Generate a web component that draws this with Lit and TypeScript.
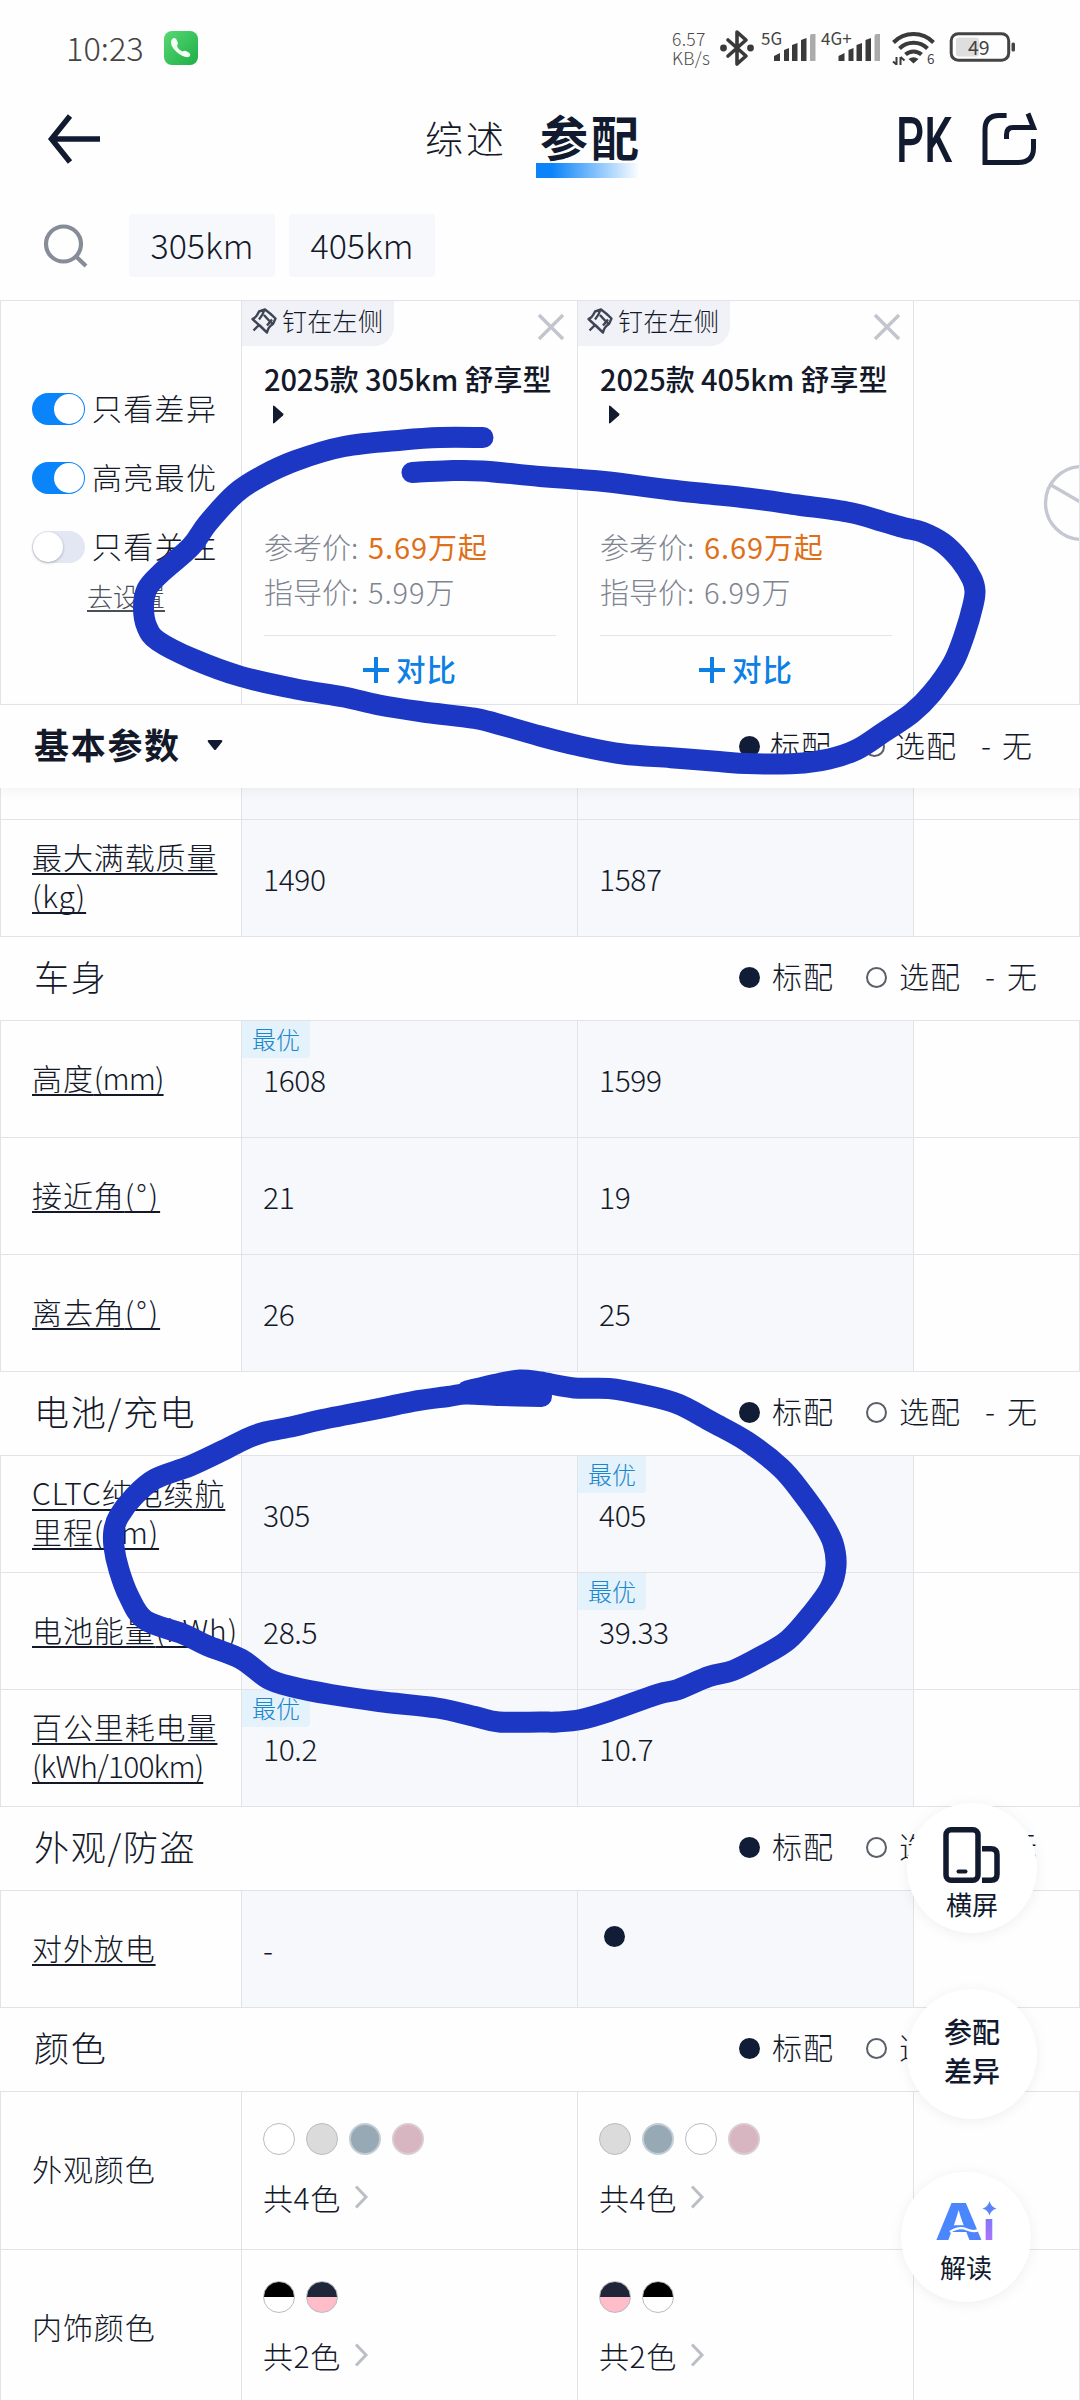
import { LitElement, html, svg, css, nothing } from "lit";
import { customElement, property } from "lit/decorators.js";

type Point = [number, number];

interface Row {
  label: string;
  unit?: string;
  /** Extra letter width class for the unit. */
  unitFit?: "narrow" | "wide";
  wrapUnit?: boolean;
  values: [string, string];
  best?: 0 | 1;
}

interface Section {
  title: string;
  rows: Row[];
}

interface ColorRow {
  label: string;
  count: number;
  swatches: [string[], string[]];
}

const SECTIONS: Section[] = [
  {
    title: "车身",
    rows: [
      { label: "高度", unit: "(mm)", unitFit: "narrow", values: ["1608", "1599"], best: 0 },
      { label: "接近角", unit: "(°)", unitFit: "wide", values: ["21", "19"] },
      { label: "离去角", unit: "(°)", unitFit: "wide", values: ["26", "25"] },
    ],
  },
  {
    title: "电池/充电",
    rows: [
      { label: "CLTC纯电续航\n里程", unit: "(km)", values: ["305", "405"], best: 1 },
      { label: "电池能量", unit: "(kWh)", values: ["28.5", "39.33"], best: 1 },
      { label: "百公里耗电量", unit: "(kWh/100km)", unitFit: "narrow", wrapUnit: true, values: ["10.2", "10.7"], best: 0 },
    ],
  },
  {
    title: "外观/防盗",
    rows: [{ label: "对外放电", values: ["-", "●"] }],
  },
];

const COLOR_ROWS: ColorRow[] = [
  { label: "外观颜色", count: 4, swatches: [["white", "silver", "steel", "rose"], ["silver", "steel", "white", "rose"]] },
  { label: "内饰颜色", count: 2, swatches: [["black-white", "navy-pink"], ["navy-pink", "black-white"]] },
];

const CARS = [
  { name: "2025款 305km 舒享型", price: "5.69万起", guide: "5.99万" },
  { name: "2025款 405km 舒享型", price: "6.69万起", guide: "6.99万" },
];

const PRICE_LOOP: Point[] = [
  [483, 437.5], [440, 437.5], [403, 440], [344, 446.5], [296, 460.5], [262, 476], [236, 493], [208, 523], [191, 546.5],
  [161, 573], [147, 589], [143.5, 608], [147, 627], [158, 641], [193, 659], [241, 676.5], [296, 689], [344, 697],
  [379, 705], [420, 711.5], [472, 718], [489, 721.5], [540, 736], [578, 745.5], [623, 754], [671, 757.7], [719, 761.5],
  [747, 763.6], [795, 763.6], [829, 759], [857, 749.5], [884, 732], [912, 713], [932, 693], [953, 663], [965, 633],
  [973, 605], [975, 591], [972, 579], [960, 560], [943, 543], [922, 532], [905, 528], [884, 522], [850, 512.5],
  [798, 505], [747, 498], [671, 490], [609, 482], [574, 479], [540, 476.5], [482, 471], [448, 470.7], [412, 472.5],
];

const RANGE_LOOP: Point[] = [
  [541.5, 1396.5], [500, 1395.5], [466, 1394], [448, 1396.5], [413, 1401.5], [379, 1408.5], [320, 1420], [293, 1426.5],
  [265, 1432], [248, 1438], [224, 1450], [190, 1466], [155, 1479], [134, 1496.5], [119, 1516], [114, 1530],
  [114, 1547], [119, 1570], [129, 1596.5], [145, 1620], [182, 1633.5], [207, 1645.5], [241, 1659], [268.5, 1679],
  [293, 1687], [331, 1694.5], [379, 1701.5], [437, 1708], [475, 1716.5], [499, 1722], [540, 1722], [557, 1722],
  [581, 1719.5], [609, 1711.5], [657, 1694.5], [678, 1689.5], [709, 1676.5], [733, 1670.5], [760, 1657], [788, 1640],
  [813, 1612], [830, 1588], [836, 1566], [833, 1543], [822, 1521.5], [802, 1493], [781, 1468], [747, 1441.5],
  [712, 1422], [678, 1404], [643, 1394.5], [609, 1388.5], [574, 1388], [540, 1382], [520, 1380], [497, 1384], [467, 1391],
];

/** Smooth line through the points (Catmull-Rom converted to Béziers). */
function smooth(points: Point[]): string {
  let d = `M${points[0][0]} ${points[0][1]}`;
  for (let i = 0; i < points.length - 1; i++) {
    const a = points[Math.max(0, i - 1)];
    const b = points[i];
    const c = points[i + 1];
    const e = points[Math.min(points.length - 1, i + 2)];
    d += `C${b[0] + (c[0] - a[0]) / 6} ${b[1] + (c[1] - a[1]) / 6} ${c[0] - (e[0] - b[0]) / 6} ${c[1] - (e[1] - b[1]) / 6} ${c[0]} ${c[1]}`;
  }
  return d;
}

const FONT = css`"Noto Sans CJK SC", "Noto Sans", sans-serif`;

@customElement("status-bar")
class StatusBar extends LitElement {
  static styles = css`
    :host { display: flex; align-items: center; height: 96px; padding: 0 64px 0 66px; color: #444; }
    .time { width: 98px; margin-top: -2px; font-size: 32.500px; line-height: 40px; font-weight: 300; white-space: nowrap; }
    .call { width: 34px; height: 34px; }
    .right { display: flex; align-items: center; margin-left: auto; }
    svg { display: block; overflow: visible; }
    .speed { width: 48px; font-size: 17.5px; line-height: 19px; font-weight: 300; color: #4a4a4a; letter-spacing: 0.300px; }
    .sig1 { margin-left: 7px; }
    .sig2 { margin-left: 4px; }
    .wifi { margin-left: 11px; }
    .battery { margin-left: 13px; }
    text { font-family: ${FONT}; fill: #444; }
  `;

  private bars() {
    return svg`
      <path d="M13 30v-5l6-3v8zM23 30V19l5-2v13zM31 30V14l5.5-2v18zM40 30V9l5.5-2v23z" fill="#3a3a3a"/>
      <path d="M49 30V5q0-2 2-2h3.5v27z" fill="#ababab"/>`;
  }

  render() {
    return html`
      <div class="time">10:23</div>
      <svg class="call" viewBox="0 0 34 34">
        <defs><linearGradient id="g" x1="0" y1="0" x2="1" y2="1"><stop stop-color="#57d873"/><stop offset="1" stop-color="#1fae47"/></linearGradient></defs>
        <rect width="34" height="34" rx="8" fill="url(#g)"/>
        <path d="M8 8.5c2-2.5 4-1.5 5 1s1.500 3.500 0 5c.5 2.500 3 5.200 5.500 6 1.500-1 3-.8 5 .3 3 1.500 3.500 3 2 4.600C21.500 29 7 19 7 11.500 7 10 7.300 9.200 8 8.500z" fill="#f2fff4"/>
      </svg>
      <div class="right">
        <div class="speed">6.57<br />KB/s</div>
        <svg width="34" height="38" viewBox="0 0 34 38" fill="none" stroke="#3a3a3a" stroke-width="3.600" stroke-linejoin="round" stroke-linecap="round">
          <path d="M8 11l18 16-9 8V3l9 8L8 27"/><circle cx="3.500" cy="19" r="1.600" fill="#3a3a3a"/><circle cx="30.500" cy="19" r="1.600" fill="#3a3a3a"/>
        </svg>
        <svg class="sig1" width="56" height="34" viewBox="0 0 56 34"><text x="0" y="14" font-size="17">5G</text>${this.bars()}</svg>
        <svg class="sig2" width="60" height="34" viewBox="0 0 60 34"><text x="0" y="14" font-size="17">4G+</text><g transform="translate(4.500 0)">${this.bars()}</g></svg>
        <svg class="wifi" width="44" height="36" viewBox="0 0 44 36" fill="none" stroke="#3a3a3a" stroke-width="4">
          <path d="M1.500 12.500a28 28 0 0 1 40 0M7.500 18.500a20 20 0 0 1 28 0M13.500 24.500a12 12 0 0 1 16 0"/>
          <path d="M21.500 33.500l-5-4.500q5-3.500 10 0z" fill="#3a3a3a" stroke="none"/>
          <path d="M4.500 27v8M1 31.500l3.500 3M8.500 35v-8M12.500 30.500l-4-3.500" stroke-width="2"/>
          <text x="35" y="34" font-size="13.500" stroke="none">6</text>
        </svg>
        <svg class="battery" width="67" height="32" viewBox="0 0 67 32">
          <rect x="2.200" y="1.700" width="57.500" height="26.500" rx="7" fill="none" stroke="#444" stroke-width="3"/>
          <rect x="7" y="5.500" width="23" height="19" rx="3" fill="#dedede"/>
          <rect x="62.500" y="10.500" width="3.500" height="9" rx="1.500" fill="#444"/>
          <text x="19" y="23" font-size="19.500">49</text>
        </svg>
      </div>`;
  }
}

@customElement("spec-legend")
class SpecLegend extends LitElement {
  @property({ type: Boolean, reflect: true }) tight = false;
  static styles = css`
    :host { display: flex; margin: -8px 0 0 auto; width: 341px; font-size: 30px; letter-spacing: 1px; line-height: 40px; font-weight: 300; color: #14192a; white-space: nowrap; }
    .item { display: flex; align-items: center; gap: 12px; }
    .standard { width: 127px; }
    .optional { width: 119px; }
    .dot { flex: none; box-sizing: border-box; width: 21px; height: 21px; margin-top: 6px; border-radius: 50%; background: #111d37; }
    .ring { background: none; border: 2.500px solid #5b5f69; }
    .none { gap: 11px; }
    :host([tight]) { margin-top: -5px; }
    :host([tight]) .dot { margin-top: 4px; }
    :host([tight]) .item { gap: 10px; }
    :host([tight]) .standard { width: 125px; }
    :host([tight]) .optional { width: 117px; }
  `;
  render() {
    return html`
      <div class="item standard"><span class="dot"></span>标配</div>
      <div class="item optional"><span class="dot ring"></span>选配</div>
      <div class="item none"><span>-</span><span>无</span></div>`;
  }
}

@customElement("app-root")
class AppRoot extends LitElement {
  static styles = css`
    :host {
      display: block; position: relative; width: 1080px; height: 2400px; overflow: hidden;
      background: #fefefe; color: #14192a; font-family: ${FONT};
    }
    svg { display: block; flex: none; overflow: visible; }

    .nav { display: flex; align-items: center; height: 86px; padding-left: 48px; }
    .tab { margin: -4px 0 0 325px; width: 80px; font-size: 38px; letter-spacing: 3px; line-height: 84px; font-weight: 300; white-space: nowrap; }
    .tab-active {
      box-sizing: border-box; width: 104px; height: 78px; margin-left: 31px; padding-left: 4px; white-space: nowrap;
      font-size: 48px; letter-spacing: 3px; line-height: 70px; font-weight: 700;
      background: linear-gradient(90deg, #0a84f8 15%, #fff) 0 100% / 104px 15px no-repeat;
      color: #111a2f;
    }
    .pk { margin-left: 259px; }
    .pk text { font-family: Roboto, "Liberation Sans", sans-serif; font-weight: 500; font-size: 63px; fill: #111a2f; }
    .share { margin-left: 28px; }

    .filters { display: flex; align-items: center; height: 110px; padding: 8px 0 0 42px; }
    .chips { display: flex; gap: 14px; margin-left: 40px; }
    .chip { width: 146px; height: 63px; line-height: 61px; text-align: center; border-radius: 4px; background: #f7f8fc; font-size: 34px; font-weight: 300; }

    .row { display: grid; grid-template-columns: 241px 336px 336px 167px; box-sizing: border-box; height: 117px; border-top: 1px solid #e1e3e8; }
    .cell { box-sizing: border-box; border-left: 1px solid #e1e3e8; position: relative; display: flex; align-items: center; min-width: 0; }
    .cell:last-child { border-right: 1px solid #e1e3e8; }
    .label { padding: 0 0 4px 31px; font-size: 30px; line-height: 39px; letter-spacing: 0.900px; font-weight: 300; white-space: pre; }
    .link { text-decoration: underline; text-decoration-thickness: 2px; text-underline-offset: 4px; text-decoration-skip-ink: none; }
    .narrow { letter-spacing: -0.850px; }
    .wide { letter-spacing: 2px; }
    .value { padding: 0 0 1px 21px; background: #f6f8fb; font-size: 30px; line-height: 40px; letter-spacing: -0.400px; font-weight: 300; }
    .best {
      position: absolute; left: 0; top: 0; width: 68px; height: 37px; line-height: 35px; text-align: center;
      background: #e4f2fc; color: #1c86cc; font-size: 24px; letter-spacing: 0; border-radius: 0 0 4px 0;
    }
    .standard-dot { width: 21px; height: 21px; border-radius: 50%; background: #111d37; margin: -24px 0 0 5px; }

    .models { height: 404px; }
    .switches { flex-direction: column; align-items: flex-start; padding: 87px 0 0 31px; }
    .switch { display: flex; align-items: center; gap: 7px; height: 41px; margin-bottom: 28px; font-size: 30px; line-height: 38px; letter-spacing: 1.300px; font-weight: 300; white-space: nowrap; }
    .switch-text { margin-top: -3px; }
    .track { box-sizing: border-box; width: 53px; height: 32px; border-radius: 16px; background: #0a84fb; padding: 1px; display: flex; justify-content: flex-end; }
    .knob { width: 30px; height: 30px; border-radius: 50%; background: #fff; }
    .off .track { background: #e3e7f3; justify-content: flex-start; }
    .off .knob { box-shadow: 0 1px 3px #0004; }
    .setup { margin: -16px 0 0 55px; font-size: 26px; line-height: 34px; font-weight: 300; color: #4b4f59; text-decoration: underline; text-decoration-thickness: 1.500px; text-underline-offset: 3px; }
    .model { flex-direction: column; align-items: stretch; padding-left: 22px; }
    .model-top { display: flex; justify-content: space-between; margin-left: -22px; padding-right: 12px; height: 45px; }
    .pin { box-sizing: border-box; display: flex; gap: 5px; width: 152px; height: 45px; padding: 7px 0 0 9px; background: #f0f2f8; border-radius: 0 0 20px 0; font-size: 25px; line-height: 24px; letter-spacing: 0.300px; font-weight: 300; white-space: nowrap; }
    .close { margin-top: 12px; }
    .model-name { margin-top: 12px; margin-bottom: 1px; font-size: 29px; line-height: 40px; font-weight: 500; letter-spacing: -0.100px; white-space: nowrap; }
    .play { margin: 6px 0 0 9px; }
    .price { display: flex; font-size: 29px; line-height: 45px; font-weight: 300; color: #7f8491; white-space: nowrap; }
    .price-first { margin-top: 100px; }
    .price-key { width: 104px; }
    .price-value { letter-spacing: 0.900px; }
    .from { color: #df701b; font-weight: 400; }
    .compare { display: flex; align-items: center; justify-content: center; gap: 7px; width: 292px; height: 68px; margin-top: 21px; border-top: 1px solid #e3e5ea; font-size: 29.500px; letter-spacing: 1px; line-height: 40px; font-weight: 500; color: #0c80e4; }
    .compare-text { margin-top: -5px; }
    .next { overflow: hidden; }
    .next svg { margin: 0 0 0 129px; }

    .section { display: flex; align-items: center; box-sizing: border-box; height: 84px; border-top: 1px solid #e1e3e8; padding-left: 34px; font-size: 35px; letter-spacing: 1.700px; font-weight: 300; background: #fefefe; }
    .section-title { margin-top: -6px; white-space: nowrap; }
    .sticky { position: relative; z-index: 1; box-shadow: 0 5px 10px #0000000a; }
    .sticky .section-title { font-weight: 700; }
    .caret { margin: 0 0 2px 26px; }
    .partial { height: 31px; border-top: none; }

    .colors { height: 158px; }
    .palette { flex-direction: column; align-items: flex-start; padding: 31px 0 0 21px; font-size: 30px; line-height: 40px; font-weight: 300; }
    .swatches { display: flex; gap: 11px; height: 32px; }
    .swatch { box-sizing: border-box; width: 32px; height: 32px; border-radius: 50%; border: 1px solid #b9bcc1; background: #fff; }
    .silver { background: #dbdbdb; }
    .steel { background: #97a9b5; border: 2px solid #c3cdd5; }
    .rose { background: #d7b6c2; border: 2px solid #dccbd1; }
    .black-white { background: linear-gradient(#000 50%, #fff 50%); }
    .navy-pink { background: linear-gradient(#20263a 50%, #ffbdc9 50%); }
    .more { display: flex; align-items: center; gap: 14px; margin-top: 22px; letter-spacing: 0.600px; }

    .fab {
      position: absolute; z-index: 2; left: 907px; width: 130px; height: 130px; border-radius: 50%; background: #fff;
      box-shadow: 0 2px 14px #00000010; display: flex; flex-direction: column; align-items: center; box-sizing: border-box;
      font-size: 26px; line-height: 34px; color: #111a2f;
    }
    .landscape { top: 1803px; padding-top: 23px; }
    .fab-label { margin-top: 3px; }
    .diff { top: 1989px; padding-top: 23px; font-size: 28px; line-height: 39px; font-weight: 500; }
    .ai { left: 901px; top: 2172px; padding-top: 29px; }
    .ai text { font-family: Inter, "Liberation Sans", sans-serif; font-weight: 800; fill: url(#ai); }
    .ai .fab-label { margin-top: 9px; }

    .ink { position: absolute; z-index: 3; left: 0; top: 0; pointer-events: none; }
  `;

  private toggle(text: string, on: boolean) {
    return html`<div class="switch ${on ? "" : "off"}"><span class="track"><span class="knob"></span></span><span class="switch-text">${text}</span></div>`;
  }

  private model(car: (typeof CARS)[number]) {
    return html`
      <div class="cell model">
        <div class="model-top">
          <div class="pin">
            <svg width="26" height="26" viewBox="0 0 26 26" fill="none" stroke="#3f4554" stroke-width="2.400" stroke-linejoin="round">
              <path d="M1.500 11Q5 10 8 3.500l6-2Q19 5 24.500 10.500L22 16q-5 3-6 8.500zM13.500 1.500Q12 7 8 11.500M22 16Q19 14 13 7M16 24.500L8.500 17M2.500 22.500l5.500-5.500M16 17.500l5-6"/>
            </svg>
            钉在左侧
          </div>
          <svg class="close" width="28" height="28" viewBox="0 0 28 28" stroke="#c2c5cd" stroke-width="3.400"><path d="M2 2l24 24M26 2L2 26"/></svg>
        </div>
        <div class="model-name">${car.name}</div>
        <svg class="play" width="11" height="19" viewBox="0 0 11 19"><path d="M0 1.500Q0 0 1.500 1L10 8.500q1 1 0 2L1.500 18Q0 19 0 17.500z" fill="#111a2f"/></svg>
        <div class="price price-first"><span class="price-key">参考价:</span><span class="price-value from">${car.price}</span></div>
        <div class="price"><span class="price-key">指导价:</span><span class="price-value">${car.guide}</span></div>
        <div class="compare">
          <svg width="26" height="26" viewBox="0 0 26 26" stroke="#0c80e4" stroke-width="4"><path d="M13 0v26M0 13h26"/></svg>
          <span class="compare-text">对比</span>
        </div>
      </div>`;
  }

  private value(row: Row, index: 0 | 1) {
    const value = row.values[index];
    return html`<div class="cell value">
      ${row.best === index ? html`<span class="best">最优</span>` : nothing}
      ${value === "●" ? html`<span class="standard-dot"></span>` : value}
    </div>`;
  }

  private row(row: Row) {
    const unit = row.unit ? html`<span class=${row.unitFit ?? "plain"}>${row.unit}</span>` : nothing;
    return html`<div class="row">
      <div class="cell label"><span class="link">${row.label}${row.wrapUnit ? "\n" : ""}${unit}</span></div>
      ${this.value(row, 0)}${this.value(row, 1)}
      <div class="cell"></div>
    </div>`;
  }

  private colors(row: ColorRow) {
    return html`<div class="row colors">
      <div class="cell label">${row.label}</div>
      ${row.swatches.map(
        (list) => html`<div class="cell palette">
          <div class="swatches">${list.map((name) => html`<span class="swatch ${name}"></span>`)}</div>
          <div class="more">共${row.count}色
            <svg width="13" height="24" viewBox="0 0 13 24" fill="none" stroke="#bbbec4" stroke-width="3"><path d="M1 1.500L11 12 1 22.500"/></svg>
          </div>
        </div>`,
      )}
      <div class="cell"></div>
    </div>`;
  }

  private section(title: string) {
    return html`<div class="section"><span class="section-title">${title}</span><spec-legend></spec-legend></div>`;
  }

  render() {
    return html`
      <status-bar></status-bar>
      <div class="nav">
        <svg width="52" height="50" viewBox="0 0 52 50" fill="none" stroke="#111a2f" stroke-width="5.500"><path d="M22 2L3.500 25 22 48M3 25h49"/></svg>
        <div class="tab">综述</div>
        <div class="tab-active">参配</div>
        <svg class="pk" width="55" height="50" viewBox="0 0 55 50"><text transform="translate(-3 48) scale(.7 1)">PK</text></svg>
        <svg class="share" width="55" height="54" viewBox="0 0 55 54" fill="none" stroke="#111a2f" stroke-width="5">
          <path d="M24.600 3.500H17Q3 3.500 3 18V50.500H36Q51.500 50.500 51.500 36V27"/>
          <path d="M24.500 27V22.500Q24.500 15.500 31 15.500H51.500L46 1.500"/>
        </svg>
      </div>
      <div class="filters">
        <svg width="47" height="46" viewBox="0 0 47 46" fill="none" stroke="#868c98" stroke-width="4.200"><circle cx="21.500" cy="22" r="17.500"/><path d="M33.500 34l10.500 10"/></svg>
        <div class="chips"><div class="chip">305km</div><div class="chip">405km</div></div>
      </div>

      <div class="row models">
        <div class="cell switches">
          ${this.toggle("只看差异", true)}${this.toggle("高亮最优", true)}${this.toggle("只看关注", false)}
          <div class="setup">去设置</div>
        </div>
        ${CARS.map((car) => this.model(car))}
        <div class="cell next">
          <svg width="78" height="78" viewBox="0 0 78 78" fill="none" stroke="#c5c8d0" stroke-width="3.400"><circle cx="39" cy="39" r="36.500"/><path d="M8 21l31 18 31-18"/></svg>
        </div>
      </div>

      <div class="section sticky">
        <span class="section-title">基本参数</span>
        <svg class="caret" width="16" height="11" viewBox="0 0 16 11"><path d="M1.500 0h13q1.500.5.500 2L9 9.500q-1 1-2 0L1 2Q0 .5 1.500 0z" fill="#111a2f"/></svg>
        <spec-legend tight></spec-legend>
      </div>
      <div class="row partial"><div class="cell"></div><div class="cell value"></div><div class="cell value"></div><div class="cell"></div></div>
      ${this.row({ label: "最大满载质量", unit: "(kg)", wrapUnit: true, values: ["1490", "1587"] })}
      ${SECTIONS.map((s) => html`${this.section(s.title)}${s.rows.map((r) => this.row(r))}`)}
      ${this.section("颜色")}
      ${COLOR_ROWS.map((r) => this.colors(r))}

      <div class="fab landscape">
        <svg width="60" height="58" viewBox="0 0 60 58" fill="none" stroke="#111a2f" stroke-width="5.500">
          <rect x="4" y="3.700" width="32" height="50.500" rx="5"/><path d="M40 22.700h9q6 0 6 6v19.500q0 6-6 6h-9"/><path d="M16.500 45.500h7" stroke-width="4" stroke-linecap="round"/>
        </svg>
        <span class="fab-label">横屏</span>
      </div>
      <div class="fab diff"><span>参配</span><span>差异</span></div>
      <div class="fab ai">
        <svg width="62" height="40" viewBox="0 0 62 40">
          <defs><linearGradient id="ai" gradientUnits="userSpaceOnUse" x1="14" y1="0" x2="44" y2="46"><stop stop-color="#4a86fd"/><stop offset=".5" stop-color="#667cfb"/><stop offset="1" stop-color="#ac72fb"/></linearGradient></defs>
          <text transform="translate(0 39) scale(1.220 1)" font-size="51">A</text>
          <text x="48.500" y="39" font-size="38">ı</text>
          <path d="M15 31q9-6 17-2.500t14-1" fill="none" stroke="#fff" stroke-width="2.200"/>
          <path d="M54.500 0q1.500 6 7 7.500-5.500 1.500-7 7-1.500-5.500-7-7 5.500-1.500 7-7.500z" fill="#5a82fb"/>
        </svg>
        <span class="fab-label">解读</span>
      </div>

      <svg class="ink" width="1080" height="2400" viewBox="0 0 1080 2400" fill="none" stroke="#1c37c3" stroke-width="21" stroke-linecap="round" stroke-linejoin="round">
        <path d=${smooth(PRICE_LOOP)}/><path d=${smooth(RANGE_LOOP)}/>
      </svg>`;
  }
}
